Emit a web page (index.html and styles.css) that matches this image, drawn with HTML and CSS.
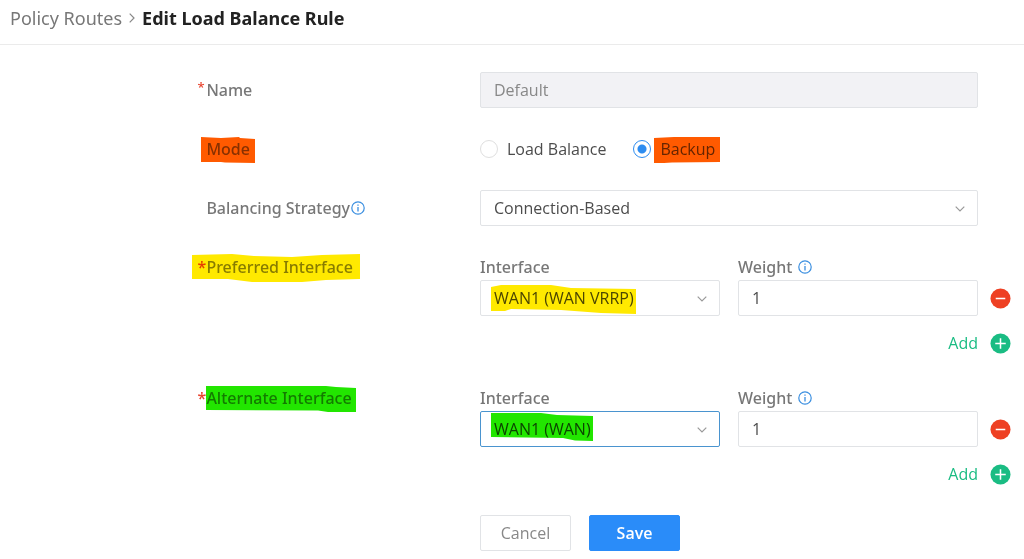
FILE: index.html
```html
<!DOCTYPE html>
<html lang="en">
<head>
  <meta charset="UTF-8" />
  <meta name="viewport" content="width=device-width, initial-scale=1.0"/>
  <title>Edit Load Balance Rule</title>
  <link rel="stylesheet" href="styles.css">
</head>
<body>
  <svg class="defs" aria-hidden="true">
    <symbol id="info" viewBox="0 0 14 14">
      <circle cx="7" cy="7" r="6.2" fill="none" stroke="currentColor" stroke-width="1.2"/>
      <path d="M7 6v4.4M7 3.4v1.4" stroke="currentColor" stroke-width="1.3"/>
    </symbol>
    <symbol id="chevron" viewBox="0 0 10 6">
      <path d="M.7.7 5 5 9.300.7" fill="none" stroke="currentColor" stroke-width="1.2"/>
    </symbol>
    <symbol id="minus" viewBox="0 0 22 22">
      <circle cx="11" cy="11" r="10.5" fill="#ee4023"/>
      <path d="M6 11h10" stroke="#fff" stroke-width="1.6"/>
    </symbol>
    <symbol id="plus" viewBox="0 0 22 22">
      <circle cx="11" cy="11" r="10.5" fill="#1abc83"/>
      <path d="M5.500 11h11M11 5.500v11" stroke="#fff" stroke-width="1.6"/>
    </symbol>
  </svg>

  <header class="header">
    <nav class="breadcrumb">
      <a href="#">Policy Routes</a>
      <svg class="separator" viewBox="0 0 6 10"><path d="M.7.7 5 5 .7 9.300" fill="none" stroke="currentColor" stroke-width="1.2"/></svg>
      <h1>Edit Load Balance Rule</h1>
    </nav>
  </header>

  <form class="form">
    <div class="row">
      <div class="label-cell">
        <span class="required raised">*</span><label for="name">Name</label>
      </div>
      <div class="field">
        <input class="control" id="name" type="text" value="Default" disabled>
      </div>
    </div>

    <div class="row">
      <div class="label-cell">
        <span class="marked" id="mode-label">Mode
          <svg class="marker mode" viewBox="0 0 54 26" preserveAspectRatio="none"><path d="M0 0 20 1 38 0 39 1 54 2V26L24 25.500 20 25 0 25Z" fill="#ff5a00"/></svg>
        </span>
      </div>
      <div class="field radios" role="radiogroup" aria-labelledby="mode-label">
        <label class="radio"><input type="radio" name="mode"> Load Balance</label>
        <label class="radio"><input type="radio" name="mode" checked>
          <span class="marked">Backup
            <svg class="marker backup" viewBox="0 0 66 26" preserveAspectRatio="none"><path d="M0 1 20 0H66V25L18 25.500 10 26H0Z" fill="#ff5a00"/></svg>
          </span>
        </label>
      </div>
    </div>

    <div class="row">
      <div class="label-cell">
        <label for="strategy">Balancing Strategy</label><svg class="info"><use href="#info"/></svg>
      </div>
      <div class="field">
        <div class="select">
          <select class="control" id="strategy"><option>Connection-Based</option></select>
          <svg class="chevron"><use href="#chevron"/></svg>
        </div>
      </div>
    </div>

    <div class="row group">
      <div class="label-cell">
        <span class="marked"><span class="required">*</span>Preferred Interface
          <svg class="marker preferred" viewBox="0 0 168 28" preserveAspectRatio="none"><path d="M0 1 40 0 62 2 100 3 130 1 168 0V25L134 26 110 28H60L36 25H0Z" fill="#ffe900"/></svg>
        </span>
      </div>
      <div class="interface">
        <label for="preferred-wan">Interface</label>
        <div class="weight-label"><label for="preferred-weight">Weight</label><svg class="info"><use href="#info"/></svg></div>
        <div class="select first">
          <select class="control" id="preferred-wan"><option>WAN1 (WAN VRRP)</option></select>
          <svg class="marker vrrp" viewBox="0 0 145 29" preserveAspectRatio="none"><path d="M0 2 10 0H60L80 3 145 4V29L110 28 70 25 20 24 14 26H0Z" fill="#ffe900"/></svg>
          <svg class="chevron"><use href="#chevron"/></svg>
        </div>
        <input class="control" id="preferred-weight" type="text" value="1">
        <button class="icon-button" type="button" aria-label="Remove"><svg><use href="#minus"/></svg></button>
        <button class="add" type="button">Add <svg><use href="#plus"/></svg></button>
      </div>
    </div>

    <div class="row group">
      <div class="label-cell">
        <span class="marked"><span class="required">*</span>Alternate Interface
          <svg class="marker alternate" viewBox="0 0 150 26" preserveAspectRatio="none"><path d="M0 0H120L130 1 150 2V26H122L112 24.500 0 24Z" fill="#22e600"/></svg>
        </span>
      </div>
      <div class="interface">
        <label for="alternate-wan">Interface</label>
        <div class="weight-label"><label for="alternate-weight">Weight</label><svg class="info"><use href="#info"/></svg></div>
        <div class="select first">
          <select class="control active" id="alternate-wan"><option>WAN1 (WAN)</option></select>
          <svg class="marker wan" viewBox="0 0 102 28" preserveAspectRatio="none"><path d="M0 0H50L66 2 102 3V28L84 27.500 72 25 0 24Z" fill="#22e600"/></svg>
          <svg class="chevron"><use href="#chevron"/></svg>
        </div>
        <input class="control" id="alternate-weight" type="text" value="1">
        <button class="icon-button" type="button" aria-label="Remove"><svg><use href="#minus"/></svg></button>
        <button class="add" type="button">Add <svg><use href="#plus"/></svg></button>
      </div>
    </div>

    <div class="row">
      <div class="actions">
        <button class="button" type="button">Cancel</button>
        <button class="button primary" type="submit">Save</button>
      </div>
    </div>
  </form>
</body>
</html>
```
FILE: styles.css
```css
* {
  box-sizing: border-box;
}
body {
  margin: 0;
  background: #fff;
  color: #4c4c4c;
  font-family: "Open Sans", sans-serif;
  font-size: 16px;
  line-height: 24px;
}
.defs {
  display: none;
}
.header {
  padding: 6px 10px 14px;
  border-bottom: 1px solid #ebebeb;
}
.breadcrumb {
  display: flex;
  align-items: center;
  gap: 7px;
  font-family: "Noto Sans", sans-serif;
  font-size: 18px;
}
.breadcrumb a {
  color: #777;
  text-decoration: none;
}
.breadcrumb h1 {
  margin: 0;
  color: #222;
  font-size: 18px;
}
.separator {
  width: 6px;
  height: 10px;
  color: #888;
}
.form {
  display: flex;
  flex-direction: column;
  gap: 23px;
  padding: 27px 13px 8px 0;
}
.row {
  display: grid;
  grid-template-columns: 480fr 531fr;
  align-items: center;
}
.label-cell {
  display: flex;
  align-items: center;
  padding-left: 43%;
  color: #777;
  font-family: "Noto Sans", sans-serif;
  font-weight: 500;
}
.label-cell .marked {
  color: #888;
}
.required {
  width: 9px;
  margin-left: -9px;
  color: #e8442e;
}
.raised {
  margin-bottom: 6px;
  font-size: 13px;
}
.field {
  margin-right: 33px;
}
.control {
  display: block;
  width: 100%;
  height: 36px;
  margin: 0;
  padding: 0 13px;
  border: 1px solid #e1e3e6;
  border-radius: 2px;
  background: #fff;
  color: #4c4c4c;
  font: inherit;
  appearance: none;
}
.control:disabled {
  background: #f2f2f5;
  color: #888;
  opacity: 1;
}
.control.active {
  border-color: #4a94cf;
}
.select {
  position: relative;
}
.chevron {
  position: absolute;
  top: 16px;
  right: 13px;
  width: 10px;
  height: 6px;
  color: #999;
  pointer-events: none;
}
.info {
  width: 14px;
  height: 14px;
  margin-left: 1px;
  color: #3b8fe0;
}
.radios {
  display: flex;
  gap: 27px;
  height: 36px;
}
.radio {
  display: flex;
  align-items: center;
  gap: 9px;
}
.radio .marked {
  color: #666;
}
.radio input {
  width: 18px;
  height: 18px;
  margin: 0;
  border: 1px solid #dfdfdf;
  border-radius: 50%;
  background: #fff;
  appearance: none;
}
.radio input:checked {
  border-color: #2d8cf0;
  background: radial-gradient(circle, #2d8cf0 4px, #fff 5px);
}
.group {
  align-items: start;
  padding-top: 5px;
}
.group .label-cell {
  line-height: 26px;
}
.interface {
  display: grid;
  grid-template-columns: 1fr 1fr 21px;
  column-gap: 12px;
  align-items: center;
  line-height: 26px;
}
.interface > label,
.weight-label {
  color: #777;
  font-family: "Noto Sans", sans-serif;
  font-weight: 500;
}
.weight-label {
  display: flex;
  grid-column: 2 / 4;
  align-items: center;
  gap: 5px;
}
.interface > label,
.first {
  margin-right: 3px;
}
.weight-label,
.interface > input {
  margin-left: 3px;
}
.interface > input {
  width: auto;
}
.icon-button,
.add {
  display: flex;
  align-items: center;
  padding: 0;
  border: 0;
  background: none;
  font: inherit;
}
.add {
  grid-column: 1 / 4;
  gap: 12px;
  justify-self: end;
  height: 28px;
  margin-top: 13px;
  color: #1abc83;
}
.icon-button svg,
.add svg {
  width: 21px;
  height: 21px;
}
.actions {
  display: flex;
  grid-column: 2;
  gap: 18px;
  padding-top: 4px;
}
.button {
  width: 91px;
  height: 36px;
  padding: 0;
  border: 1px solid #e1e3e6;
  border-radius: 2px;
  background: #fff;
  color: #888;
  font: inherit;
}
.button.primary {
  border-color: #2a8cf9;
  background: #2a8cf9;
  color: #fff;
  font-weight: 600;
}

/* highlighter strokes drawn over the text */
.marked {
  display: flex;
  position: relative;
}
.marker {
  position: absolute;
  mix-blend-mode: multiply;
  pointer-events: none;
}
.mode {
  top: 0;
  left: -5px;
  width: 54px;
  height: 26px;
}
.backup {
  top: 0;
  left: -6px;
  width: 66px;
  height: 26px;
}
.preferred {
  top: 0;
  left: -14px;
  width: 168px;
  height: 28px;
}
.alternate {
  top: 1px;
  left: 0;
  width: 150px;
  height: 26px;
}
.vrrp {
  top: 5px;
  left: 11px;
  width: 145px;
  height: 29px;
}
.wan {
  top: 2px;
  left: 11px;
  width: 102px;
  height: 28px;
}
```
